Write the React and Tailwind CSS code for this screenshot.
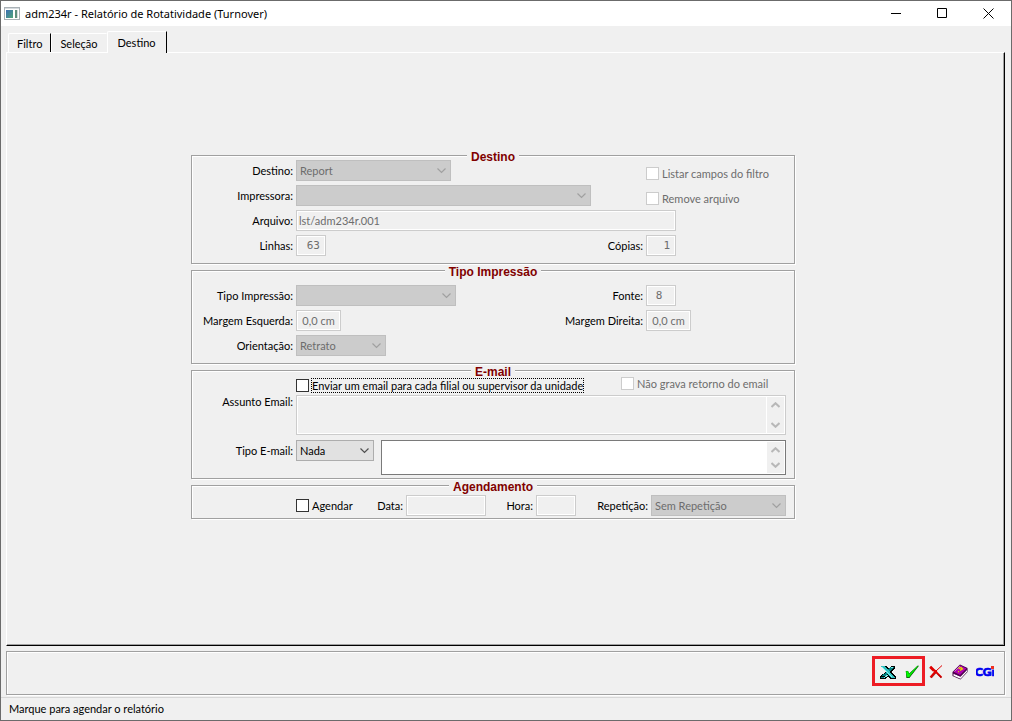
import { useState } from 'react';

const INPUT = 'h-[21px] border border-[#cccccc] bg-[#f0f0f0] text-[#6d6d6d] shadow-[inset_0_0_0_1px_#fff] outline-none';

const TABS = [
  { id: 'filtro', label: 'Filtro' },
  { id: 'selecao', label: 'Seleção' },
  { id: 'destino', label: 'Destino' },
];

function Group({ title, className, children }) {
  return (
    <fieldset className="border border-[#a0a0a0] shadow-[1px_1px_0_#fff,inset_1px_1px_0_#fff]">
      <legend className="mx-auto h-1 px-1 bg-[#f0f0f0] font-['Liberation_Sans',Arial,sans-serif] text-xs leading-[6px] font-bold text-[#800000] whitespace-nowrap">{title}</legend>
      <div className={`pr-2 ${className}`}>{children}</div>
    </fieldset>
  );
}

function Label({ htmlFor, first, children }) {
  return (
    <label htmlFor={htmlFor} className={`shrink-0 whitespace-nowrap text-right mr-[3px] ${first ? 'w-[101px]' : ''}`}>
      {children}
    </label>
  );
}

function Select({ id, value, className, disabled = true }) {
  return (
    <div className={`relative h-[21px] ${className}`}>
      <select
        id={id}
        disabled={disabled}
        defaultValue={value}
        className={`appearance-none w-full h-full pl-[3px] border outline-none disabled:opacity-100 ${
          disabled ? 'bg-[#cccccc] border-[#bfbfbf] text-[#6d6d6d]' : 'bg-[#e1e1e1] border-[#adadad] text-black'
        }`}
      >
        <option>{value}</option>
      </select>
      <svg className="absolute right-1 top-2 pointer-events-none" width="10" height="6" viewBox="0 0 10 6" fill="none"
        strokeWidth="1.2" stroke={disabled ? '#a0a0a0' : '#505050'}>
        <path d="M0.5 0.5 L4.5 4.5 L8.5 0.5" />
      </svg>
    </div>
  );
}

function Check({ id, label, disabled, focused }) {
  return (
    <div className="flex items-center shrink-0">
      <input
        id={id}
        type="checkbox"
        disabled={disabled}
        className={`appearance-none w-[13px] h-[13px] mr-0.5 border bg-white shrink-0 ${disabled ? 'border-[#cccccc]' : 'border-[#333333]'}`}
      />
      <label
        htmlFor={id}
        className={`whitespace-nowrap leading-[13px] border border-dotted ${focused ? 'border-black' : 'border-transparent'} ${disabled ? 'text-[#6d6d6d]' : ''}`}
      >
        {label}
      </label>
    </div>
  );
}

function Memo({ id, label, className, disabled }) {
  return (
    <div className={`flex flex-1 min-w-0 border p-px ${className}`}>
      <textarea id={id} aria-label={label} disabled={disabled} className="flex-1 min-w-0 resize-none outline-none bg-transparent" />
      <div className="w-[18px] pr-px flex flex-col justify-between items-center py-[5px] bg-[#f0f0f0] border-l border-white">
        <svg width="9" height="6" viewBox="0 0 9 6" fill="none" stroke="#b8b8b8" strokeWidth="2">
          <path d="M0.5 5 L4.5 1.2 L8.5 5" />
        </svg>
        <svg width="9" height="6" viewBox="0 0 9 6" fill="none" stroke="#b8b8b8" strokeWidth="2">
          <path d="M0.5 1 L4.5 4.8 L8.5 1" />
        </svg>
      </div>
    </div>
  );
}

function AppIcon() {
  return (
    <svg width="16" height="14" viewBox="0 0 16 14" shapeRendering="crispEdges">
      <defs>
        <linearGradient id="app" x1="0" y1="0" x2="1" y2="1">
          <stop offset="0" stopColor="#3c6fb4" />
          <stop offset="1" stopColor="#4fa57a" />
        </linearGradient>
      </defs>
      <rect x="0.5" y="0.5" width="15" height="12" fill="#fff" stroke="#a9b1b6" />
      <rect x="1" y="1" width="14" height="1" fill="#d5dade" />
      <rect x="2" y="3" width="7" height="8" fill="url(#app)" />
      <rect x="11" y="3" width="2" height="8" fill="#5f8f7c" />
      <rect x="13" y="3" width="1" height="8" fill="#d5dade" />
    </svg>
  );
}

function ExcelIcon() {
  return (
    <svg width="16" height="14" viewBox="0 0 16 14" shapeRendering="crispEdges">
      <path d="M1 1 H6 L9 4 L11 1 H15 V4 L11 7 L16 12 V14 H10 L8 11 L6 14 H0 V11 L6 7 Z" fill="#000" />
      <path d="M10 2 H14 L5 11 H1 L7 7 Z" fill="#008080" />
      <path d="M1 1 H5 L15 13 H11 Z" fill="#30c0c0" />
      <path d="M2 2 H3 L12 12 H11 Z" fill="#80f0f0" />
      <path d="M1 12 H5 L7 10" fill="none" stroke="#008080" />
      <path d="M11 3 L13 2 M8 10 L4 13" stroke="#80e8e8" />
    </svg>
  );
}

function CheckIcon() {
  return (
    <svg width="16" height="14" viewBox="0 0 16 14">
      <path d="M1.8 6 H4 L5.2 8.6 L13.5 0.8 H15 L5.4 13 H2.4 Z" fill="#004800" />
      <path d="M2.2 6.4 H4 L5 9.6 L13.6 1.2 L5 12 H3.2 Z" fill="#00f800" stroke="#00f800" strokeWidth="0.6" />
    </svg>
  );
}

function CancelIcon() {
  return (
    <svg width="16" height="14" viewBox="0 0 16 14" fill="none" stroke="#e00000">
      <path d="M2.5 1.5 L13.5 12.5" strokeWidth="1.8" />
      <path d="M14 0.5 L8 6" strokeWidth="1" />
      <path d="M8.5 5.5 L2.5 12.5" strokeWidth="2.2" />
      <path d="M2 2 L6 6" strokeWidth="2.4" />
      <path d="M3.5 13 L8 8 M10 9.5 L13.5 13" stroke="#700000" strokeWidth="0.6" />
    </svg>
  );
}

function BookIcon() {
  return (
    <svg width="16" height="16" viewBox="0 0 16 16">
      <path d="M0.5 8 L8 0.5 L15.5 4 V8 L8.5 15.5 L0.5 12 Z" fill="#400040" />
      <path d="M1.5 9.8 L8.5 12.8 L15 6 V7.8 L8.5 14.7 L1.5 11.8 Z" fill="#fff" />
      <path d="M1.5 7.8 L8 1.3 L14.5 4.4 L8 11 Z" fill="#b000b0" />
      <path d="M1 9 L8.3 12 L15 5.2" fill="none" stroke="#600060" strokeWidth="0.8" />
      <path d="M2.5 7.5 L8 2" stroke="#e0a0e0" strokeWidth="0.7" />
      <path d="M6.5 4.5 L9 3.6 L10.4 4.8 L8 6.3 M7 7.4 L6.2 8" fill="none" stroke="#e8d800" strokeWidth="1.4" />
    </svg>
  );
}

function CgiIcon() {
  return (
    <svg width="18" height="14" viewBox="0 0 18 14">
      <text x="-1" y="11" fontFamily="Lato, sans-serif" fontSize="12" fontWeight="900" fill="#0000f0" stroke="#0000f0" strokeWidth="0.7">CGi</text>
      <rect x="15" y="1" width="3" height="3" fill="#f03020" />
    </svg>
  );
}

export default function App() {
  const [tab, setTab] = useState('destino');

  return (
    <div className="min-h-screen flex flex-col border border-[#6b6b6b] bg-[#f0f0f0] font-[Lato,sans-serif] text-[11px] leading-[13px] text-black">
      <header className="h-[25px] flex items-center bg-white pl-[3px]">
        <AppIcon />
        <h1 className="ml-[5px] flex-1 font-['Noto_Sans',sans-serif] text-[11px]">adm234r - Relatório de Rotatividade (Turnover)</h1>
        <button aria-label="Minimizar" className="w-[46px] h-full flex items-center justify-center">
          <svg width="11" height="11" viewBox="0 0 11 11" stroke="#000"><path d="M0 5.5 H10" /></svg>
        </button>
        <button aria-label="Maximizar" className="w-[46px] h-full flex items-center justify-center">
          <svg width="11" height="11" viewBox="0 0 11 11" fill="none" stroke="#000"><path d="M0.5 0.5 H9.5 V9.5 H0.5 Z" /></svg>
        </button>
        <button aria-label="Fechar" className="w-[46px] h-full flex items-center justify-center">
          <svg width="11" height="11" viewBox="0 0 11 11" stroke="#000"><path d="M0.5 0.5 L10.5 10.5 M10.5 0.5 L0.5 10.5" /></svg>
        </button>
      </header>

      <main className="flex-1 flex flex-col pl-[5px] pr-1.5 pt-[5px]">
        <div role="tablist" className="flex items-end h-[21px] pl-0.5">
          {TABS.map((t) => (
            <button
              key={t.id}
              role="tab"
              aria-selected={tab === t.id}
              onClick={() => setTab(t.id)}
              className={`border-t border-l border-white rounded-tl-xs ${
                tab === t.id
                  ? 'relative h-[22px] -mb-px px-[10px] bg-[#f0f0f0] border-r border-r-black'
                  : 'h-[19px] px-2 border-r border-r-transparent first:border-r-black'
              }`}
            >
              {t.label}
            </button>
          ))}
        </div>

        <section className="flex-1 flex flex-col items-center justify-center border-t border-l border-r border-b border-t-white border-l-white border-r-black border-b-black shadow-[inset_-1px_-1px_0_#a0a0a0] pr-[25px] pb-[26px]">
          <form className="w-full max-w-[604px] flex flex-col gap-[5px]">
            <Group title="Destino" className="pb-[7px]">
              <div className="flex flex-col gap-1 pt-0.5">
                <div className="flex items-center">
                  <Label htmlFor="destino" first>Destino:</Label>
                  <Select id="destino" value="Report" className="w-[155px]" />
                  <div className="ml-auto w-[140px] self-end"><Check id="listar" label="Listar campos do filtro" disabled /></div>
                </div>
                <div className="flex items-center">
                  <Label htmlFor="impressora" first>Impressora:</Label>
                  <Select id="impressora" value="" className="w-[295px]" />
                  <div className="ml-auto w-[140px] self-end"><Check id="remove" label="Remove arquivo" disabled /></div>
                </div>
                <div className="flex items-center">
                  <Label htmlFor="arquivo" first>Arquivo:</Label>
                  <input id="arquivo" disabled defaultValue="lst/adm234r.001" className={`${INPUT} w-[380px] pl-0.5`} />
                </div>
                <div className="flex items-center">
                  <Label htmlFor="linhas" first>Linhas:</Label>
                  <input id="linhas" disabled defaultValue="63" className={`${INPUT} w-[30px] pr-[5px] text-right font-['DejaVu_Sans_Mono',monospace]`} />
                  <div className="ml-auto"><Label htmlFor="copias">Cópias:</Label></div>
                  <div className="w-[140px] flex">
                    <input id="copias" disabled defaultValue="1" className={`${INPUT} w-[30px] pr-[5px] text-right font-['DejaVu_Sans_Mono',monospace]`} />
                  </div>
                </div>
              </div>
            </Group>

            <Group title="Tipo Impressão" className="pb-[7px]">
              <div className="flex flex-col gap-1 pt-3">
                <div className="flex items-center">
                  <Label htmlFor="tipo" first>Tipo Impressão:</Label>
                  <Select id="tipo" value="" className="w-40" />
                  <div className="ml-auto"><Label htmlFor="fonte">Fonte:</Label></div>
                  <div className="w-[140px] flex">
                    <input id="fonte" disabled defaultValue="8" className={`${INPUT} w-[30px] pr-1 text-center font-['DejaVu_Sans_Mono',monospace]`} />
                  </div>
                </div>
                <div className="flex items-center">
                  <Label htmlFor="esquerda" first>Margem Esquerda:</Label>
                  <input id="esquerda" disabled defaultValue="0,0 cm" className={`${INPUT} w-[45px] text-center`} />
                  <div className="ml-auto"><Label htmlFor="direita">Margem Direita:</Label></div>
                  <div className="w-[140px] flex">
                    <input id="direita" disabled defaultValue="0,0 cm" className={`${INPUT} w-[45px] text-center`} />
                  </div>
                </div>
                <div className="flex items-center">
                  <Label htmlFor="orientacao" first>Orientação:</Label>
                  <Select id="orientacao" value="Retrato" className="w-[90px]" />
                </div>
              </div>
            </Group>

            <Group title="E-mail" className="pb-[3px]">
              <div className="flex flex-col pt-[3px]">
                <div className="flex items-start pl-[104px]">
                  <div className="pt-0.5"><Check id="enviar" label="Enviar um email para cada filial ou supervisor da unidade" focused /></div>
                  <div className="ml-auto w-[165px]"><Check id="retorno" label="Não grava retorno do email" disabled /></div>
                </div>
                <div className="flex items-start">
                  <div className="pt-0.5 flex"><Label htmlFor="assunto" first>Assunto Email:</Label></div>
                  <Memo id="assunto" disabled className="h-10 mt-0.5 border-[#cccccc] bg-[#f0f0f0] shadow-[inset_0_0_0_1px_#fff]" />
                </div>
                <div className="flex items-start mt-[5px]">
                  <div className="h-[21px] flex items-center">
                    <Label htmlFor="tipo-email" first>Tipo E-mail:</Label>
                    <Select id="tipo-email" value="Nada" className="w-[78px] mr-[7px]" disabled={false} />
                  </div>
                  <Memo id="corpo" label="Texto do email" className="h-[35px] border-[#7a7a7a] bg-white" />
                </div>
              </div>
            </Group>

            <Group title="Agendamento" className="pb-0.5">
              <div className="flex items-center pl-[104px] pt-[7px]">
                <Check id="agendar" label="Agendar" />
                <div className="flex-1 flex items-center justify-end">
                  <Label htmlFor="data">Data:</Label>
                  <input id="data" disabled className={`${INPUT} w-20`} />
                </div>
                <div className="w-[90px] flex items-center justify-end">
                  <Label htmlFor="hora">Hora:</Label>
                  <input id="hora" disabled className={`${INPUT} w-10`} />
                </div>
                <div className="w-[210px] flex items-center justify-end">
                  <Label htmlFor="repeticao">Repetição:</Label>
                  <Select id="repeticao" value="Sem Repetição" className="w-[135px]" />
                </div>
              </div>
            </Group>
          </form>
        </section>

        <div className="h-11 mt-[5px] mb-px pr-[10px] flex items-center justify-end border border-[#a0a0a0] shadow-[1px_1px_0_#fff,inset_1px_1px_0_#fff]">
          <div className="h-[30px] mr-[3px] mb-1 pl-[5px] pr-0.5 pt-0.5 flex items-center gap-2 border-3 border-[#ed1c24]">
            <button aria-label="Excel"><ExcelIcon /></button>
            <button aria-label="Confirmar"><CheckIcon /></button>
          </div>
          <div className="flex items-center gap-2 mb-0.5">
            <button aria-label="Cancelar"><CancelIcon /></button>
            <button aria-label="Ajuda"><BookIcon /></button>
            <button aria-label="CGI"><CgiIcon /></button>
          </div>
        </div>
      </main>

      <footer className="h-[23px] mt-px px-2 pb-0.5 flex items-center border-t border-[#d7d7d7]">Marque para agendar o relatório</footer>
    </div>
  );
}
